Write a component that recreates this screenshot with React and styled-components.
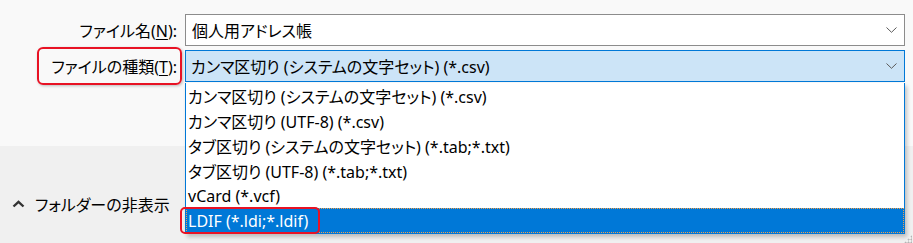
import React from "react";
import styled, { createGlobalStyle } from "styled-components";

const GlobalStyle = createGlobalStyle`
    html, body {
        margin: 0;
        padding: 0;
    }

    body {
        width: 913px;
        height: 243px;
        overflow: hidden;
        background: #f0f0f0;
        color: #000;
        font-family: "Noto Sans", "Noto Sans CJK JP", sans-serif;
        font-size: 16px;
        font-feature-settings: "palt";
    }
`;

const Dialog = styled.div`
    position: relative;
    width: 913px;
    height: 243px;
    display: grid;
    grid-template-rows: 146px 1fr;
`;

const TopPane = styled.div`
    background: #f9f9f9;
    padding-top: 14px;
    display: grid;
    grid-template-columns: 185px 720px;
    grid-auto-rows: 32px;
    row-gap: 4px;
    align-content: start;
`;

const Label = styled.div`
    display: flex;
    align-items: center;
    justify-content: flex-end;
    padding-right: 8px;

    > span {
        position: relative;
    }

    > span::after {
        content: "";
        display: ${(props) => (props.marked ? "block" : "none")};
        position: absolute;
        left: -14px;
        right: -5px;
        top: -7px;
        bottom: -7px;
        border: 2px solid #e81224;
        border-radius: 6px;
        box-shadow: 1px 1px 3px rgba(0, 0, 0, 0.25);
    }

    u {
        text-decoration-thickness: 1px;
        text-underline-offset: 2px;
    }
`;

const Field = styled.div`
    display: flex;
    align-items: center;
    justify-content: space-between;
    box-sizing: border-box;
    padding: 0 7px 0 ${(props) => (props.active ? "5px" : "6px")};
    background: ${(props) => (props.active ? "#cce4f7" : "#fff")};
    border: 1px solid ${(props) => (props.active ? "#0078d7" : "#8c8c8c")};
`;

const Chevron = () => (
    <svg width="11" height="6" viewBox="0 0 11 6">
        <path d="M0.5 0.5 L5.5 5.3 L10.5 0.5" fill="none" stroke="#5a5a5a" strokeWidth="1" />
    </svg>
);

const BottomPane = styled.div`
    display: flex;
    align-items: center;
    padding: 18px 0 0 12px;
`;

const FolderToggle = styled.div`
    display: flex;
    align-items: center;
    gap: 10px;
`;

const DropList = styled.ul`
    position: absolute;
    top: 83px;
    left: 185px;
    width: 720px;
    margin: 0;
    padding: 0;
    list-style: none;
    box-sizing: border-box;
    background: #fff;
    border: 1px solid #0078d7;
    border-top: none;
    box-shadow: 2px 3px 4px rgba(0, 0, 0, 0.22);
`;

const Item = styled.li`
    height: 25px;
    display: flex;
    align-items: stretch;
    padding-left: 2px;
    background: ${(props) => (props.selected ? "#0078d7" : "transparent")};
    color: ${(props) => (props.selected ? "#fff" : "#000")};
    outline: ${(props) => (props.selected ? "1px dotted #f3a04a" : "none")};
    outline-offset: -1px;

    > span {
        position: relative;
        display: flex;
        align-items: center;
    }

    > span::after {
        content: "";
        display: ${(props) => (props.marked ? "block" : "none")};
        position: absolute;
        left: -8px;
        right: -12px;
        top: -1px;
        bottom: -1px;
        border: 2px solid #e81224;
        border-radius: 5px;
    }
`;

const Grip = styled.div`
    position: absolute;
    right: 1px;
    bottom: 0;
    width: 8px;
    height: 8px;
    background-image: radial-gradient(#b4b4b4 45%, transparent 50%);
    background-size: 3px 3px;
    clip-path: polygon(100% 0, 100% 100%, 0 100%);
`;

const items = [
    "カンマ区切り (システムの文字セット) (*.csv)",
    "カンマ区切り (UTF-8) (*.csv)",
    "タブ区切り (システムの文字セット) (*.tab;*.txt)",
    "タブ区切り (UTF-8) (*.tab;*.txt)",
    "vCard (*.vcf)",
    "LDIF (*.ldi;*.ldif)",
];

const App = () => {
    return (
        <>
            <GlobalStyle />
            <Dialog>
                <TopPane>
                    <Label>
                        <span>
                            ファイル名(<u>N</u>):
                        </span>
                    </Label>
                    <Field>
                        <span>個人用アドレス帳</span>
                        <Chevron />
                    </Field>

                    <Label marked>
                        <span>
                            ファイルの種類(<u>T</u>):
                        </span>
                    </Label>
                    <Field active>
                        <span>{items[0]}</span>
                        <Chevron />
                    </Field>
                </TopPane>

                <BottomPane>
                    <FolderToggle>
                        <svg width="13" height="8" viewBox="0 0 13 8">
                            <path d="M1.5 6.5 L6.5 1.8 L11.5 6.5" fill="none" stroke="#333" strokeWidth="2.4" />
                        </svg>
                        <span>フォルダーの非表示</span>
                    </FolderToggle>
                </BottomPane>

                <DropList>
                    {items.map((text, i) => (
                        <Item key={text} selected={i === 5} marked={i === 5}>
                            <span>{text}</span>
                        </Item>
                    ))}
                </DropList>
                <Grip />
            </Dialog>
        </>
    );
};

export default App;
